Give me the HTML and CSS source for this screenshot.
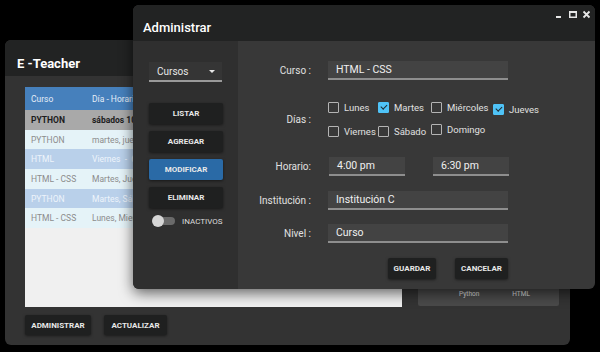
FILE: index.html
```html
<!DOCTYPE html>
<html lang="es">
<head>
    <meta charset="UTF-8">
    <meta name="viewport" content="width=device-width, initial-scale=1.0">
    <title>E-Teacher</title>
    <link rel="stylesheet" href="styles.css">
</head>
<body>
    <main class="desktop">
        <!-- ventana principal -->
        <section class="window window-main">
            <header class="title-bar">
                <h1 class="title main-title">E -Teacher</h1>
            </header>
            <div class="main-body">
                <div class="list-col">
                    <div class="table-wrap">
                        <table class="course-table">
                            <thead>
                                <tr><th class="col-course">Curso</th><th>Día - Horari</th></tr>
                            </thead>
                            <tbody>
                                <tr class="row-selected"><td>PYTHON</td><td>sábados 10</td></tr>
                                <tr class="row-light"><td>PYTHON</td><td>martes, juev</td></tr>
                                <tr class="row-blue"><td>HTML</td><td>Viernes  -  6</td></tr>
                                <tr class="row-light"><td>HTML - CSS</td><td>Martes, Juev</td></tr>
                                <tr class="row-blue"><td>PYTHON</td><td>Martes, Sáb</td></tr>
                                <tr class="row-light"><td>HTML - CSS</td><td>Lunes, Mierc</td></tr>
                            </tbody>
                        </table>
                    </div>
                    <div class="main-actions">
                        <button class="btn">ADMINISTRAR</button>
                        <button class="btn">ACTUALIZAR</button>
                    </div>
                </div>
                <div class="detail-col">
                    <div class="detail-box">
                        <div class="detail-row"><span>Python</span><span>HTML</span></div>
                    </div>
                </div>
            </div>
        </section>

        <!-- ventana administrar -->
        <section class="window window-admin">
            <header class="title-bar">
                <h2 class="title admin-title">Administrar</h2>
                <div class="win-controls">
                    <svg width="40" height="12" viewBox="0 0 40 12">
                        <rect x="1" y="6" width="5" height="2" fill="#e6e6e6"/>
                        <rect x="14.75" y="1.75" width="6.5" height="5.5" fill="none" stroke="#e6e6e6" stroke-width="1.5"/>
                        <rect x="14" y="1" width="8" height="2" fill="#e6e6e6"/>
                        <path d="M28.5 1.5 L34.5 7.5 M34.5 1.5 L28.5 7.5" stroke="#e6e6e6" stroke-width="1.8"/>
                    </svg>
                </div>
            </header>
            <div class="admin-body">
                <aside class="side-panel">
                    <div class="select">
                        <span>Cursos</span>
                        <span class="caret"></span>
                    </div>
                    <div class="side-buttons">
                        <button class="btn side-btn">LISTAR</button>
                        <button class="btn side-btn">AGREGAR</button>
                        <button class="btn side-btn btn-active">MODIFICAR</button>
                        <button class="btn side-btn">ELIMINAR</button>
                    </div>
                    <div class="toggle-wrap">
                        <span class="toggle"><span class="knob"></span></span>
                        <span class="toggle-label">INACTIVOS</span>
                    </div>
                </aside>
                <div class="form-panel">
                    <div class="form-row row-curso">
                        <label class="form-label">Curso :</label>
                        <div class="field field-wide">HTML - CSS</div>
                    </div>
                    <div class="form-row row-dias">
                        <label class="form-label">Días :</label>
                        <div class="days">
                            <span class="day"><span class="box"></span>Lunes</span>
                            <span class="day"><span class="box checked"></span>Martes</span>
                            <span class="day"><span class="box"></span>Miércoles</span>
                            <span class="day day-jueves"><span class="box checked"></span>Jueves</span>
                            <span class="day"><span class="box"></span>Viernes</span>
                            <span class="day"><span class="box"></span>Sábado</span>
                            <span class="day day-domingo"><span class="box"></span>Domingo</span>
                        </div>
                    </div>
                    <div class="form-row row-horario">
                        <label class="form-label">Horario:</label>
                        <div class="time-pair">
                            <div class="field field-time">4:00 pm</div>
                            <div class="field field-time">6:30 pm</div>
                        </div>
                    </div>
                    <div class="form-row row-inst">
                        <label class="form-label">Institución :</label>
                        <div class="field field-wide">Institución C</div>
                    </div>
                    <div class="form-row row-nivel">
                        <label class="form-label">Nivel :</label>
                        <div class="field field-wide">Curso</div>
                    </div>
                    <div class="form-actions">
                        <button class="btn form-btn">GUARDAR</button>
                        <button class="btn form-btn btn-cancel">CANCELAR</button>
                    </div>
                </div>
            </div>
        </section>
    </main>
</body>
</html>
```

FILE: styles.css
```css
/* Global */
body {
    margin: 0;
    background-color: #000;
    font-family: 'Roboto', 'Liberation Sans', sans-serif;
    color: #e6e6e6;
}

.desktop {
    position: relative;
    width: 600px;
    height: 352px;
    overflow: hidden;
}

.window {
    position: absolute;
    border-radius: 6px;
    overflow: hidden;
    display: flex;
    flex-direction: column;
}

.title-bar {
    height: 36px;
    flex-shrink: 0;
    display: flex;
    align-items: center;
    justify-content: space-between;
    background-color: #222323;
}

.title {
    margin: 0;
    color: #fff;
    font-size: 13px;
}

button.btn {
    border: none;
    border-radius: 2px;
    background-color: #1f2020;
    color: #e8e8e8;
    font-family: 'Roboto', 'Liberation Sans', sans-serif;
    font-size: 8px;
    font-weight: 700;
    padding: 0;
    box-shadow: 0 1px 3px rgba(0, 0, 0, 0.5);
}

/* Main window */
.window-main {
    left: 5px;
    top: 40px;
    width: 565px;
    height: 305px;
    background-color: #333333;
}

.main-title {
    padding: 10px 0 0 12px;
    font-weight: 700;
}

.main-body {
    flex: 1;
    display: flex;
    padding: 11px 0 0 20px;
    gap: 16px;
}

.list-col {
    display: flex;
    flex-direction: column;
}

.table-wrap {
    width: 377px;
    height: 220px;
    background-color: #f0f0f0;
    overflow: hidden;
}

.course-table {
    border-collapse: collapse;
    table-layout: fixed;
    width: 100%;
    font-size: 8.5px;
}

.course-table th {
    background-color: #4680bc;
    color: #e3ecf7;
    font-weight: 400;
    text-align: left;
    height: 23px;
    padding: 0 0 0 6px;
    white-space: nowrap;
}

.course-table .col-course {
    width: 55px;
}

.course-table td {
    height: 19.7px;
    padding: 0 0 0 6px;
    white-space: pre;
}

.row-selected td {
    background-color: #a9a9a9;
    color: #1c1c1c;
    font-weight: 700;
}

.row-light td {
    background-color: #e5f3f8;
    color: #8c8c8c;
}

.row-blue td {
    background-color: #b9d0ea;
    color: #eef4fb;
}

.main-actions {
    display: flex;
    gap: 13px;
    margin-top: 8px;
}

.main-actions .btn {
    height: 20px;
    width: 66px;
}

.main-actions .btn + .btn {
    width: 63px;
}

.detail-col {
    display: flex;
    flex-direction: column;
    padding-top: 197px;
}

.detail-box {
    width: 141px;
    height: 22px;
    background-color: #4a4a4a;
    border-radius: 2px;
    font-size: 6.5px;
    color: #e0e0e0;
    box-sizing: border-box;
    padding-top: 6px;
}

.detail-row {
    display: flex;
    gap: 33px;
    justify-content: center;
    padding-left: 12px;
}

/* Admin window */
.window-admin {
    left: 133px;
    top: 5px;
    width: 462px;
    height: 284px;
    background-color: #383838;
    box-shadow: 0 4px 14px rgba(0, 0, 0, 0.6);
}

.admin-title {
    padding: 9px 0 0 10px;
    font-weight: 500;
}

.win-controls {
    align-self: flex-start;
    padding-top: 5px;
    line-height: 0;
}

.admin-body {
    flex: 1;
    display: flex;
}

.side-panel {
    width: 105px;
    background-color: #2f2f2f;
    padding: 21px 0 0 16px;
    box-sizing: border-box;
}

.select {
    width: 73px;
    height: 20px;
    box-sizing: border-box;
    border-bottom: 2px solid #9a9a9a;
    background-color: #353535;
    display: flex;
    align-items: center;
    justify-content: space-between;
    padding: 0 7px 0 8px;
    font-size: 10px;
    color: #e8e8e8;
}

.caret {
    width: 0;
    height: 0;
    border-left: 3px solid transparent;
    border-right: 3px solid transparent;
    border-top: 3px solid #e8e8e8;
}

.side-buttons {
    display: flex;
    flex-direction: column;
    gap: 7px;
    margin-top: 21px;
}

.side-btn {
    width: 74px;
    height: 21px;
}

button.btn-active {
    background-color: #2a6aa6;
}

.toggle-wrap {
    display: flex;
    align-items: center;
    margin-top: 7px;
    padding-left: 3px;
    gap: 7px;
}

.toggle {
    position: relative;
    width: 23px;
    height: 12px;
    display: inline-block;
}

.toggle::before {
    content: "";
    position: absolute;
    left: 3px;
    right: 0;
    top: 2px;
    height: 8px;
    border-radius: 4px;
    background-color: #6a6a6a;
}

.knob {
    position: absolute;
    left: 0;
    top: 0;
    width: 12px;
    height: 12px;
    border-radius: 50%;
    background-color: #d6d6d6;
}

.toggle-label {
    font-size: 8px;
    color: #dcdcdc;
}

.form-panel {
    flex: 1;
    display: flex;
    flex-direction: column;
}

.form-row {
    display: flex;
    align-items: center;
}

.form-label {
    width: 73px;
    text-align: right;
    font-size: 10px;
    color: #e0e0e0;
    margin-right: 17px;
}

.field {
    height: 19px;
    box-sizing: border-box;
    background-color: #434343;
    border-bottom: 2px solid #8e8e8e;
    font-size: 10.5px;
    color: #f0f0f0;
    padding: 0 0 0 8px;
    display: flex;
    align-items: center;
}

.field-wide {
    width: 180px;
}

.row-curso {
    margin-top: 20px;
}

.row-dias {
    margin-top: 21px;
}

.days {
    display: grid;
    grid-template-columns: 50px 53px 62px auto;
    row-gap: 10px;
    font-size: 9.5px;
    color: #e0e0e0;
}

.day {
    display: flex;
    align-items: center;
    gap: 5px;
    height: 12px;
    white-space: nowrap;
}

.day-jueves {
    margin-top: 2px;
}

.day-domingo {
    margin-top: -2px;
}

.box {
    width: 11px;
    height: 11px;
    box-sizing: border-box;
    border: 1.5px solid #b4b4b4;
    border-radius: 1px;
    flex-shrink: 0;
    position: relative;
}

.box.checked {
    border-color: #4fc3f7;
    background-color: #4fc3f7;
}

.box.checked::after {
    content: "";
    position: absolute;
    left: 2.5px;
    top: 0.5px;
    width: 2.5px;
    height: 5px;
    border-right: 1.5px solid #1e2a30;
    border-bottom: 1.5px solid #1e2a30;
    transform: rotate(45deg);
}

.row-horario {
    margin-top: 20px;
}

.time-pair {
    display: flex;
    gap: 28px;
    margin-left: 1px;
}

.field-time {
    width: 76px;
}

.row-inst {
    margin-top: 15px;
}

.row-nivel {
    margin-top: 14px;
}

.form-actions {
    display: flex;
    gap: 19px;
    margin: 15px 0 0 150px;
}

.form-btn {
    width: 48px;
    height: 21px;
}

.btn-cancel {
    width: 53px;
}
```
